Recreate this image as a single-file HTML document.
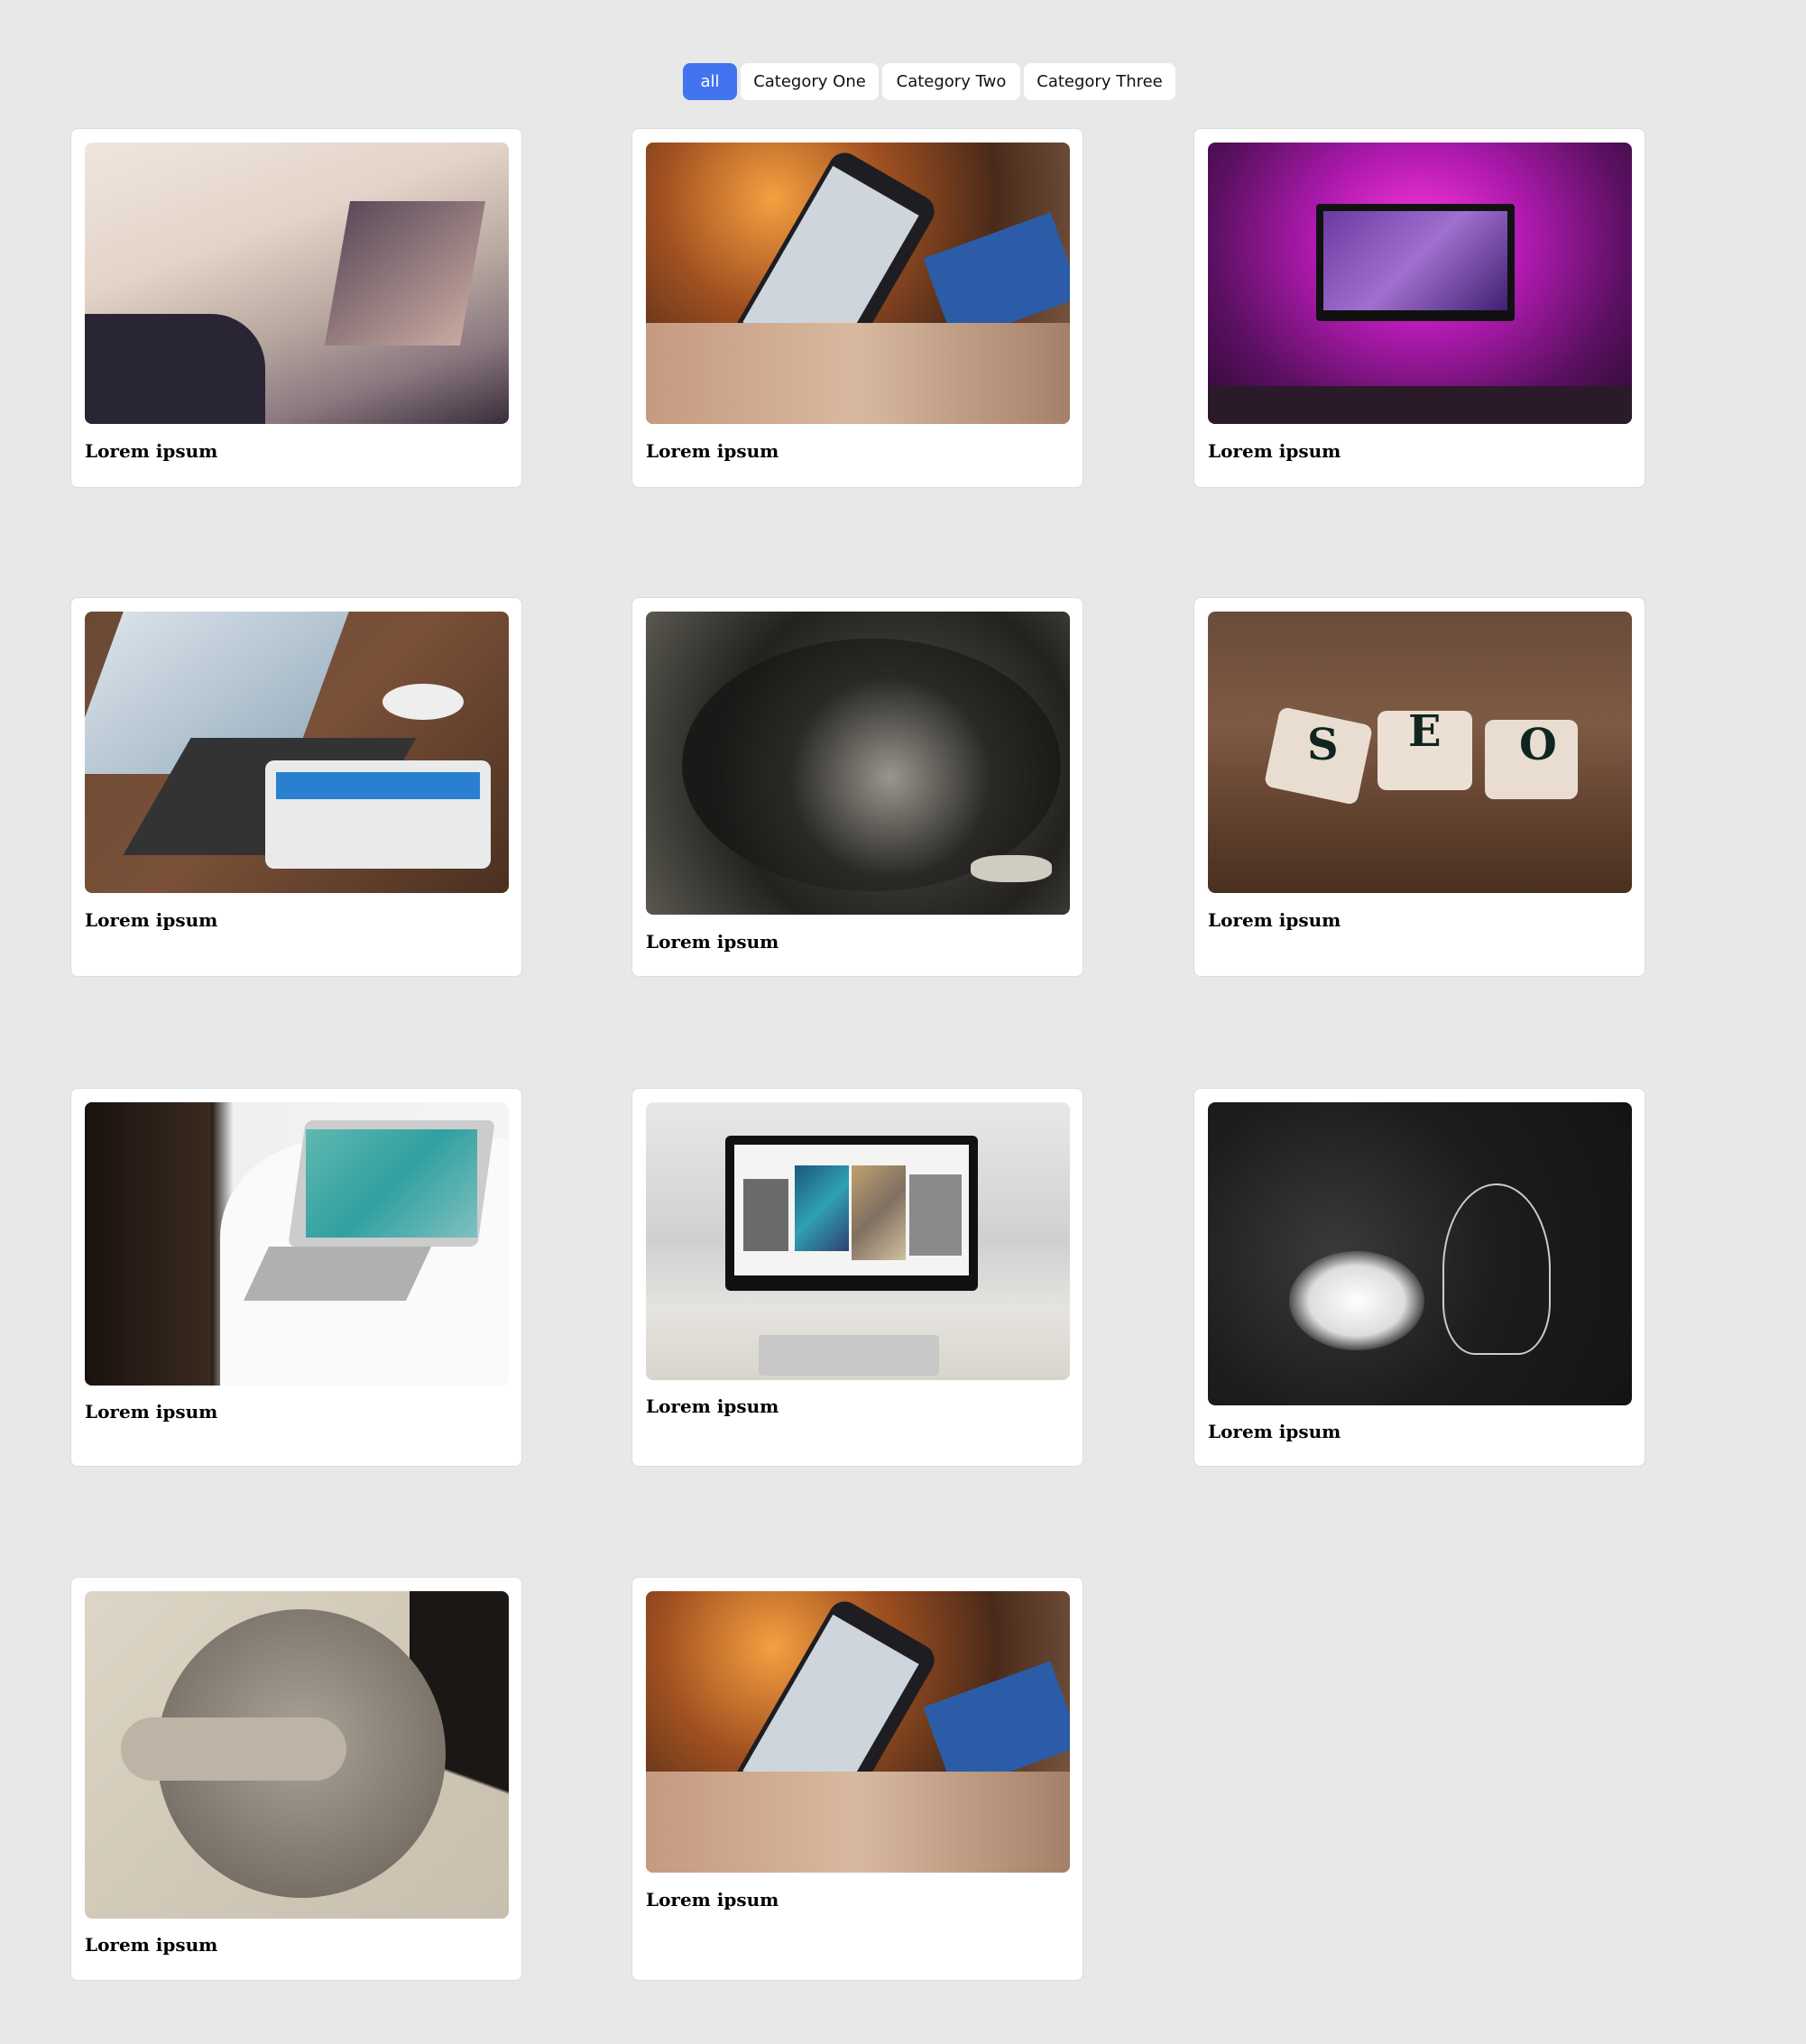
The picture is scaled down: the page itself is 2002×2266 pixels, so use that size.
<!DOCTYPE html>
<html><head><meta charset="utf-8"><style>
*{margin:0;padding:0;box-sizing:border-box}
body{width:2002px;height:2266px;background:#e8e8e8;position:relative;overflow:hidden;font-family:"Liberation Sans",sans-serif}
.btn{position:absolute;top:70px;height:41px;border-radius:8px;background:#fff;color:#111;font-family:"DejaVu Sans","Liberation Sans",sans-serif;font-size:18px;line-height:41px;text-align:center}
.btn.a{background:#4274f0;color:#fff}
.card{position:absolute;width:501px;background:#fff;border:1px solid #dcdcdc;border-radius:8px}
.img{position:absolute;left:15px;width:470px;border-radius:8px;overflow:hidden}
.t{position:absolute;left:15px;font-family:"DejaVu Serif","Liberation Serif",serif;font-weight:bold;font-size:20px;line-height:26px;color:#000}
</style></head><body>
<div class="btn a" style="left:757px;width:60px">all</div>
<div class="btn" style="left:821px;width:153px">Category One</div>
<div class="btn" style="left:978px;width:153px">Category Two</div>
<div class="btn" style="left:1135px;width:168px">Category Three</div>

<!-- row1 -->
<div class="card" style="left:78px;top:142px;height:399px">
 <div class="img" style="top:15px;height:312px;background:linear-gradient(160deg,#efe6df 0%,#e4d3c8 35%,#b7a79f 60%,#8a7880 80%,#3a2d3a 100%)">
  <div style="position:absolute;left:280px;top:65px;width:150px;height:160px;background:linear-gradient(135deg,#5a4a5a,#c9a9a0);transform:skewX(-10deg)"></div>
  <div style="position:absolute;left:0;top:190px;width:200px;height:122px;background:#2a2535;border-radius:0 60px 0 0"></div>
 </div>
 <div class="t" style="top:344px">Lorem ipsum</div>
</div>
<div class="card" style="left:700px;top:142px;height:399px">
 <div class="img" style="top:15px;height:312px;background:radial-gradient(circle at 30% 20%,#f5a040 0%,#a05020 30%,#4a2a1a 60%,#8a6a50 100%)">
  <div style="position:absolute;left:140px;top:20px;width:130px;height:260px;background:#1e1e22;border-radius:18px;transform:rotate(30deg)"></div>
  <div style="position:absolute;left:150px;top:40px;width:110px;height:200px;background:#cfd5dc;transform:rotate(30deg)"></div>
  <div style="position:absolute;left:320px;top:100px;width:150px;height:100px;background:#2c5ca8;transform:rotate(-20deg)"></div>
  <div style="position:absolute;left:0;top:200px;width:470px;height:112px;background:linear-gradient(90deg,#c59a80,#d8b9a0,#a58068)"></div>
 </div>
 <div class="t" style="top:344px">Lorem ipsum</div>
</div>
<div class="card" style="left:1323px;top:142px;height:399px">
 <div class="img" style="top:15px;height:312px;background:radial-gradient(ellipse at 50% 35%,#ff3ad8 0%,#b01ab0 35%,#5a1060 70%,#2a0a30 100%)">
  <div style="position:absolute;left:120px;top:68px;width:220px;height:130px;background:#111;border-radius:4px"></div>
  <div style="position:absolute;left:128px;top:76px;width:204px;height:110px;background:linear-gradient(135deg,#6a3aa0,#a070d0,#402070)"></div>
  <div style="position:absolute;left:0;top:270px;width:470px;height:42px;background:#2a1a2a"></div>
 </div>
 <div class="t" style="top:344px">Lorem ipsum</div>
</div>

<!-- row2 -->
<div class="card" style="left:78px;top:662px;height:421px">
 <div class="img" style="top:15px;height:312px;background:linear-gradient(135deg,#6a4a35,#7a5038 50%,#4a3020)">
  <div style="position:absolute;left:10px;top:0;width:250px;height:180px;background:linear-gradient(135deg,#d8e0e8,#9ab0c0);transform:skewX(-20deg)"></div>
  <div style="position:absolute;left:80px;top:140px;width:250px;height:130px;background:#333;transform:skewX(-30deg)"></div>
  <div style="position:absolute;left:200px;top:165px;width:250px;height:120px;background:#e8eaec;border-radius:10px"></div>
  <div style="position:absolute;left:212px;top:178px;width:226px;height:30px;background:#2a80d0"></div>
  <div style="position:absolute;left:330px;top:80px;width:90px;height:40px;background:#eee;border-radius:50%"></div>
 </div>
 <div class="t" style="top:344px">Lorem ipsum</div>
</div>
<div class="card" style="left:700px;top:662px;height:421px">
 <div class="img" style="top:15px;height:336px;background:radial-gradient(circle at 60% 50%,#bcb8b0 0%,#3a3835 35%,#23221f 60%,#5a5850 100%)">
  <div style="position:absolute;left:40px;top:30px;width:420px;height:280px;border-radius:50%;background:radial-gradient(circle at 55% 55%,#9a968e 0%,#2a2926 40%,#1a1917 70%);"></div>
  <div style="position:absolute;left:360px;top:270px;width:90px;height:30px;background:#d0ccc0;border-radius:40%"></div>
 </div>
 <div class="t" style="top:368px">Lorem ipsum</div>
</div>
<div class="card" style="left:1323px;top:662px;height:421px">
 <div class="img" style="top:15px;height:312px;background:linear-gradient(180deg,#6a4c3a,#7e5a44 40%,#5a3c2a 80%,#4a3020)">
  <div style="position:absolute;left:70px;top:115px;width:105px;height:90px;background:#e8ddd0;border-radius:10px;transform:rotate(12deg)"></div>
  <div style="position:absolute;left:188px;top:110px;width:105px;height:88px;background:#ebe0d3;border-radius:10px"></div>
  <div style="position:absolute;left:307px;top:120px;width:103px;height:88px;background:#e8ddd0;border-radius:10px"></div>
  <div style="position:absolute;left:110px;top:120px;font:bold 48px 'DejaVu Serif',serif;color:#102520">S</div>
  <div style="position:absolute;left:222px;top:105px;font:bold 48px 'DejaVu Serif',serif;color:#102520">E</div>
  <div style="position:absolute;left:345px;top:120px;font:bold 48px 'DejaVu Serif',serif;color:#102520">O</div>
 </div>
 <div class="t" style="top:344px">Lorem ipsum</div>
</div>

<!-- row3 -->
<div class="card" style="left:78px;top:1206px;height:420px">
 <div class="img" style="top:15px;height:314px;background:linear-gradient(90deg,#1a1410 0%,#2a2018 30%,#f0f0f0 35%,#f4f4f4 100%)">
  <div style="position:absolute;left:150px;top:40px;width:320px;height:274px;background:#fafafa;border-radius:40% 0 0 0"></div>
  <div style="position:absolute;left:235px;top:20px;width:210px;height:140px;background:#ccc;transform:skewX(-8deg);border-radius:8px"></div>
  <div style="position:absolute;left:245px;top:30px;width:190px;height:120px;background:linear-gradient(135deg,#60b8b0,#30a0a0,#80c0c0)"></div>
  <div style="position:absolute;left:190px;top:160px;width:180px;height:60px;background:#b0b0b0;transform:skewX(-25deg)"></div>
  <div style="position:absolute;left:0;top:0;width:140px;height:314px;background:linear-gradient(90deg,#1a120e,#3a2a20)"></div>
 </div>
 <div class="t" style="top:345px">Lorem ipsum</div>
</div>
<div class="card" style="left:700px;top:1206px;height:420px">
 <div class="img" style="top:15px;height:308px;background:linear-gradient(180deg,#e8e8e8,#d0d0d0 50%,#e6e4e0 75%,#d8d4cc)">
  <div style="position:absolute;left:88px;top:37px;width:280px;height:172px;background:#111;border-radius:6px"></div>
  <div style="position:absolute;left:98px;top:47px;width:260px;height:145px;background:#f4f4f4"></div>
  <div style="position:absolute;left:165px;top:70px;width:60px;height:95px;background:linear-gradient(135deg,#1a5a7a,#30a0b0,#304070)"></div>
  <div style="position:absolute;left:228px;top:70px;width:60px;height:105px;background:linear-gradient(135deg,#c0a070,#807060,#d0c0a0)"></div>
  <div style="position:absolute;left:292px;top:80px;width:58px;height:90px;background:#8a8a8a"></div>
  <div style="position:absolute;left:108px;top:85px;width:50px;height:80px;background:#6a6a6a"></div>
  <div style="position:absolute;left:125px;top:258px;width:200px;height:45px;background:#c8c8c8;border-radius:4px"></div>
 </div>
 <div class="t" style="top:339px">Lorem ipsum</div>
</div>
<div class="card" style="left:1323px;top:1206px;height:420px">
 <div class="img" style="top:15px;height:336px;background:radial-gradient(circle at 30% 50%,#3a3a3a,#1c1c1c 50%,#141414)">
  <div style="position:absolute;left:90px;top:165px;width:150px;height:110px;background:radial-gradient(ellipse,#fff 0%,#ddd 50%,rgba(200,200,200,0) 75%);border-radius:50%"></div>
  <div style="position:absolute;left:260px;top:90px;width:120px;height:190px;border:2px solid #ccc;border-radius:50% 50% 30% 30%"></div>
 </div>
 <div class="t" style="top:367px">Lorem ipsum</div>
</div>

<!-- row4 -->
<div class="card" style="left:78px;top:1748px;height:448px">
 <div class="img" style="top:15px;height:363px;background:linear-gradient(135deg,#ddd5c5,#cfc6b5 60%,#c8bfae)">
  <div style="position:absolute;left:360px;top:0;width:110px;height:363px;background:linear-gradient(200deg,#1a1715 55%,transparent 56%)"></div>
  <div style="position:absolute;left:80px;top:20px;width:320px;height:320px;border-radius:50%;background:radial-gradient(circle at 50% 45%,#aaa398,#7a7268 70%,#6a6258)"></div>
  <div style="position:absolute;left:40px;top:140px;width:250px;height:70px;background:#bdb4a6;border-radius:35px"></div>
 </div>
 <div class="t" style="top:394px">Lorem ipsum</div>
</div>
<div class="card" style="left:700px;top:1748px;height:448px">
 <div class="img" style="top:15px;height:312px;background:radial-gradient(circle at 30% 20%,#f5a040 0%,#a05020 30%,#4a2a1a 60%,#8a6a50 100%)">
  <div style="position:absolute;left:140px;top:20px;width:130px;height:260px;background:#1e1e22;border-radius:18px;transform:rotate(30deg)"></div>
  <div style="position:absolute;left:150px;top:40px;width:110px;height:200px;background:#cfd5dc;transform:rotate(30deg)"></div>
  <div style="position:absolute;left:320px;top:100px;width:150px;height:100px;background:#2c5ca8;transform:rotate(-20deg)"></div>
  <div style="position:absolute;left:0;top:200px;width:470px;height:112px;background:linear-gradient(90deg,#c59a80,#d8b9a0,#a58068)"></div>
 </div>
 <div class="t" style="top:344px">Lorem ipsum</div>
</div>
</body></html>
